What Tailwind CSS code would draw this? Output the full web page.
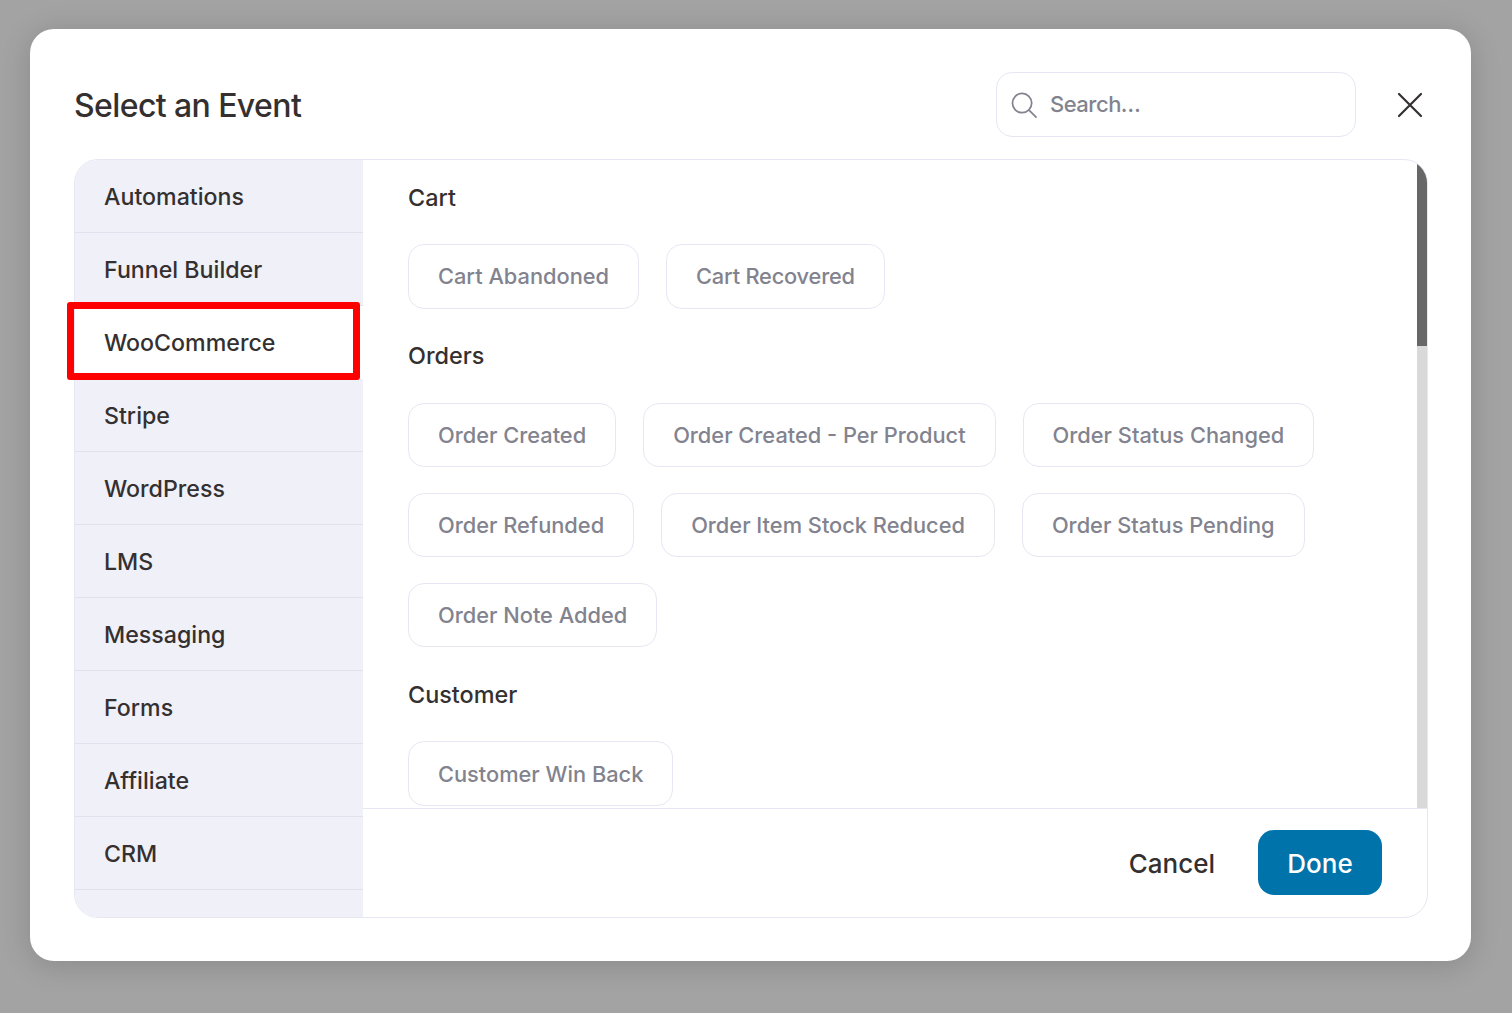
<!DOCTYPE html>
<html lang="en">
<head>
    <meta charset="UTF-8">
    <title>Select an Event</title>
    <script src="https://cdn.jsdelivr.net/npm/@tailwindcss/browser@4"></script>
</head>
<body class="bg-[#a3a3a3] font-['Inter',sans-serif] overflow-hidden">
    <div class="w-[1512px] h-[1013px] pt-[29px] pl-[30px]">
        <!-- Modal -->
        <div class="relative w-[1441px] h-[932px] bg-white rounded-[24px] shadow-[0_4px_30px_rgba(0,0,0,0.16)] px-[44px] pt-[43px]">
            <div class="flex items-center h-[65px] mb-[22px]">
                <h1 class="pt-[2px] text-[32px] font-medium text-[#353030] tracking-[-0.6px]">Select an Event</h1>
                <div class="ml-auto flex items-center w-[360px] h-[65px] border border-[#e7e7f3] rounded-[16px] pl-[14px]">
                    <svg class="w-[26px] h-[26px] text-[#82838e]" viewBox="0 0 27 27" fill="none" stroke="currentColor" stroke-width="1.8" stroke-linecap="round">
                        <circle cx="11.5" cy="11.5" r="10"/>
                        <path d="M19 19l7 7"/>
                    </svg>
                    <span class="ml-[13px] text-[22px] font-medium tracking-[-0.5px] text-[#82838e]">Search…</span>
                </div>
                <button class="ml-[41px] mr-[4px] w-[26px] h-[26px] text-[#353030]">
                    <svg class="w-[26px] h-[26px]" viewBox="0 0 26 26" fill="none" stroke="currentColor" stroke-width="2.2" stroke-linecap="round">
                        <path d="M2 2l22 22M24 2L2 24"/>
                    </svg>
                </button>
            </div>

            <!-- Frame -->
            <div class="flex w-[1354px] h-[759px] border border-[#e7e7f3] rounded-[24px] overflow-hidden">
                <ul class="w-[288px] shrink-0 bg-[#f0f0f9] text-[23.2px] font-medium text-[#353030]">
                    <li class="h-[73px] flex items-center pl-[29px] pt-[2px] border-b border-[#e2e2ee]">Automations</li>
                    <li class="h-[73px] flex items-center pl-[29px] pt-[2px] border-b border-[#e2e2ee]">Funnel Builder</li>
                    <li class="h-[73px] flex items-center pl-[29px] pt-[2px] bg-white">WooCommerce</li>
                    <li class="h-[73px] flex items-center pl-[29px] pt-[2px] border-b border-[#e2e2ee]">Stripe</li>
                    <li class="h-[73px] flex items-center pl-[29px] pt-[2px] border-b border-[#e2e2ee]">WordPress</li>
                    <li class="h-[73px] flex items-center pl-[29px] pt-[2px] border-b border-[#e2e2ee]">LMS</li>
                    <li class="h-[73px] flex items-center pl-[29px] pt-[2px] border-b border-[#e2e2ee]">Messaging</li>
                    <li class="h-[73px] flex items-center pl-[29px] pt-[2px] border-b border-[#e2e2ee]">Forms</li>
                    <li class="h-[73px] flex items-center pl-[29px] pt-[2px] border-b border-[#e2e2ee]">Affiliate</li>
                    <li class="h-[73px] flex items-center pl-[29px] pt-[2px] border-b border-[#e2e2ee]">CRM</li>
                </ul>
                <div class="flex-1 flex flex-col min-w-0">
                    <div class="relative h-[648px] overflow-hidden pl-[45px] pt-[21px]">
                        <h2 class="h-[34px] flex items-center text-[23.4px] font-medium text-[#353030]">Cart</h2>
                        <div class="flex gap-[27px] mt-[29px]">
                            <div class="h-[65px] flex items-center px-[29px] border border-[#e7e7f3] rounded-[16px] text-[21.8px] font-medium text-[#82838e]">Cart Abandoned</div>
                            <div class="h-[65px] flex items-center px-[29px] border border-[#e7e7f3] rounded-[16px] text-[21.8px] font-medium tracking-[-0.2px] text-[#82838e]">Cart Recovered</div>
                        </div>
                        <h2 class="h-[34px] flex items-center mt-[30px] text-[23.4px] font-medium text-[#353030]">Orders</h2>
                        <div class="flex flex-col gap-[26px] mt-[30px]">
                            <div class="flex gap-[27px]">
                                <div class="h-[64px] flex items-center px-[29px] border border-[#e7e7f3] rounded-[16px] text-[21.8px] font-medium text-[#82838e]">Order Created</div>
                                <div class="h-[64px] flex items-center px-[29px] border border-[#e7e7f3] rounded-[16px] text-[21.8px] font-medium text-[#82838e]">Order Created - Per Product</div>
                                <div class="h-[64px] flex items-center px-[29px] border border-[#e7e7f3] rounded-[16px] text-[21.8px] font-medium text-[#82838e]">Order Status Changed</div>
                            </div>
                            <div class="flex gap-[27px]">
                                <div class="h-[64px] flex items-center px-[29px] border border-[#e7e7f3] rounded-[16px] text-[21.8px] font-medium text-[#82838e]">Order Refunded</div>
                                <div class="h-[64px] flex items-center px-[29px] border border-[#e7e7f3] rounded-[16px] text-[21.8px] font-medium text-[#82838e]">Order Item Stock Reduced</div>
                                <div class="h-[64px] flex items-center px-[29px] border border-[#e7e7f3] rounded-[16px] text-[21.8px] font-medium text-[#82838e]">Order Status Pending</div>
                            </div>
                            <div class="flex gap-[27px]">
                                <div class="h-[64px] flex items-center px-[29px] border border-[#e7e7f3] rounded-[16px] text-[21.8px] font-medium text-[#82838e]">Order Note Added</div>
                            </div>
                        </div>
                        <h2 class="h-[34px] flex items-center mt-[31px] text-[23.4px] font-medium text-[#353030]">Customer</h2>
                        <div class="flex gap-[27px] mt-[29px]">
                            <div class="h-[65px] flex items-center px-[29px] pt-[1px] border border-[#e7e7f3] rounded-[16px] text-[21.8px] font-medium text-[#82838e]">Customer Win Back</div>
                        </div>
                        <!-- scrollbar -->
                        <div class="absolute top-0 right-0 w-[10px] h-full bg-[#d9d9d9]">
                            <div class="w-full h-[186px] bg-[#676767]"></div>
                        </div>
                    </div>
                    <div class="flex-1 flex items-center justify-end border-t border-[#e7e7f3] pr-[45px] pb-[2px]">
                        <button class="pt-[2px] text-[26px] font-medium text-[#353030] mr-[43px]">Cancel</button>
                        <button class="w-[124px] h-[65px] pt-[2px] rounded-[16px] bg-[#0073aa] text-[26px] font-medium text-white">Done</button>
                    </div>
                </div>
            </div>

            <!-- Highlight round WooCommerce -->
            <div class="absolute left-[37px] top-[273px] w-[293px] h-[78px] border-[7px] border-[#ff0000] rounded-[3px]"></div>
        </div>
    </div>
</body>
</html>
